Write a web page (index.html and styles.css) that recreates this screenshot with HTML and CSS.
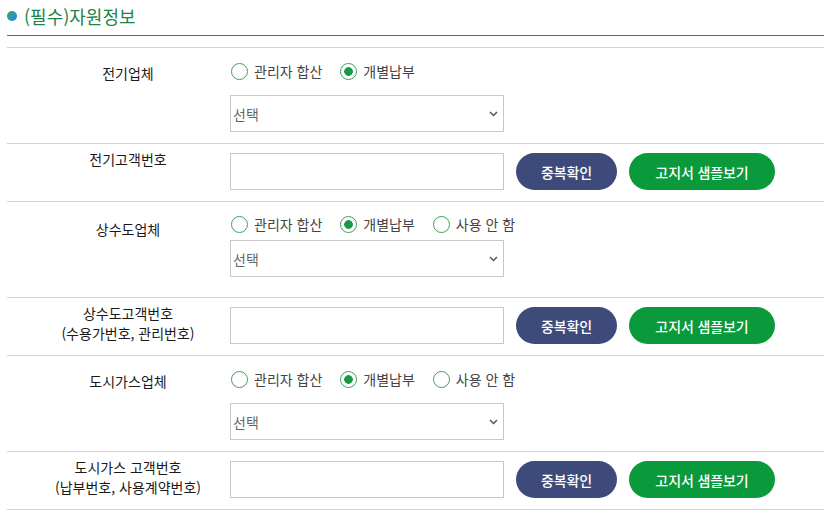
FILE: index.html
```html
<!DOCTYPE html>
<html lang="ko">
<head>
<meta charset="utf-8">
<title>(필수)자원정보</title>
<link rel="stylesheet" href="styles.css">
</head>
<body>
<div class="wrap">
  <h2 class="title"><span class="dot"></span>(필수)자원정보</h2>
  <div class="form">
    <div class="row row-choice">
      <div class="label">전기업체</div>
      <div class="value">
        <div class="radios">
          <label class="radio"><input type="radio" name="elec">관리자 합산</label>
          <label class="radio"><input type="radio" name="elec" checked>개별납부</label>
        </div>
        <div class="select-wrap">
          <select class="select"><option>선택</option></select>
          <svg class="chev" width="9" height="6" viewBox="0 0 9 6"><path d="M1 1l3.5 3.5L8 1" fill="none" stroke="#555" stroke-width="1.5"/></svg>
        </div>
      </div>
    </div>
    <div class="row row-field">
      <div class="label">전기고객번호<br>&nbsp;</div>
      <div class="value">
        <input class="text" type="text">
        <button class="btn btn-navy" type="button">중복확인</button>
        <button class="btn btn-green" type="button">고지서 샘플보기</button>
      </div>
    </div>
    <div class="row row-choice compact">
      <div class="label">상수도업체</div>
      <div class="value">
        <div class="radios">
          <label class="radio"><input type="radio" name="water">관리자 합산</label>
          <label class="radio"><input type="radio" name="water" checked>개별납부</label>
          <label class="radio"><input type="radio" name="water">사용 안 함</label>
        </div>
        <div class="select-wrap">
          <select class="select"><option>선택</option></select>
          <svg class="chev" width="9" height="6" viewBox="0 0 9 6"><path d="M1 1l3.5 3.5L8 1" fill="none" stroke="#555" stroke-width="1.5"/></svg>
        </div>
      </div>
    </div>
    <div class="row row-field">
      <div class="label">상수도고객번호<br>(수용가번호, 관리번호)</div>
      <div class="value">
        <input class="text" type="text">
        <button class="btn btn-navy" type="button">중복확인</button>
        <button class="btn btn-green" type="button">고지서 샘플보기</button>
      </div>
    </div>
    <div class="row row-choice">
      <div class="label">도시가스업체</div>
      <div class="value">
        <div class="radios">
          <label class="radio"><input type="radio" name="gas">관리자 합산</label>
          <label class="radio"><input type="radio" name="gas" checked>개별납부</label>
          <label class="radio"><input type="radio" name="gas">사용 안 함</label>
        </div>
        <div class="select-wrap">
          <select class="select"><option>선택</option></select>
          <svg class="chev" width="9" height="6" viewBox="0 0 9 6"><path d="M1 1l3.5 3.5L8 1" fill="none" stroke="#555" stroke-width="1.5"/></svg>
        </div>
      </div>
    </div>
    <div class="row row-field">
      <div class="label">도시가스 고객번호<br>(납부번호, 사용계약번호)</div>
      <div class="value">
        <input class="text" type="text">
        <button class="btn btn-navy" type="button">중복확인</button>
        <button class="btn btn-green" type="button">고지서 샘플보기</button>
      </div>
    </div>
  </div>
</div>
</body>
</html>
```

FILE: styles.css
```css
* { box-sizing: border-box; }

body {
  margin: 0;
  background: #fff;
  font-family: "Noto Sans CJK KR", "Noto Sans", sans-serif;
  color: #222;
}

.wrap {
  width: 817px;
  margin-left: 7px;
}

.title {
  display: flex;
  align-items: center;
  gap: 7px;
  height: 36px;
  margin: 0;
  padding-bottom: 4px;
  font-size: 18px;
  font-weight: 400;
  color: #218347;
  border-bottom: 1px solid #2f8442;
}

.dot {
  width: 10px;
  height: 10px;
  border-radius: 50%;
  background: linear-gradient(135deg, #3aa845 0%, #2a96c8 60%, #1f7fd0 100%);
}

.form {
  margin-top: 11px;
  border-top: 1px solid #c9d8de;
}

.row {
  display: flex;
  border-bottom: 1px solid #c9d8de;
}

.label {
  width: 223px;
  flex: none;
  padding-left: 19px;
  text-align: center;
  font-size: 14px;
  line-height: 20px;
  color: #1a1a1a;
}

.row-choice .value {
  display: flex;
  flex-direction: column;
  gap: 14px;
  padding: 13px 0 11px;
}

.row-choice .label { padding-top: 15px; }

.row-choice.compact .value {
  gap: 6px;
  padding: 12px 0 20px;
}

.row-choice.compact .label { padding-top: 17px; }

.row-field .value {
  display: flex;
  align-items: center;
  gap: 12px;
  padding: 9px 0 11px;
}

.row-field .label { padding-top: 5px; }

.radios {
  display: flex;
  align-items: center;
  height: 20px;
  gap: 17px;
}

.radio {
  display: flex;
  align-items: center;
  gap: 6px;
  font-size: 14px;
  color: #444;
  white-space: nowrap;
}

.radio input {
  appearance: none;
  -webkit-appearance: none;
  width: 17px;
  height: 17px;
  margin: 0 0 0 1px;
  border: 1px solid #3c9f5d;
  border-radius: 50%;
  background: #fff;
}

.radio input:checked {
  background: radial-gradient(circle, #169a43 0 4px, #fff 4.6px);
}

.select-wrap {
  position: relative;
  width: 274px;
  height: 37px;
}

.select {
  appearance: none;
  -webkit-appearance: none;
  width: 100%;
  height: 100%;
  padding: 0 0 0 2px;
  border: 1px solid #c8c8c8;
  border-radius: 0;
  background: #fff;
  font-family: inherit;
  font-size: 14px;
  color: #666;
}

.chev {
  position: absolute;
  right: 6px;
  top: 16px;
}

.text {
  width: 274px;
  height: 37px;
  margin: 0;
  border: 1px solid #c8c8c8;
  border-radius: 0;
  background: #fff;
  flex: none;
}

.btn {
  height: 37px;
  margin: 0;
  border: none;
  border-radius: 19px;
  color: #fff;
  font-family: inherit;
  font-size: 14px;
  font-weight: 500;
  letter-spacing: -0.1px;
  flex: none;
}

.btn-navy {
  width: 101px;
  background: #3e4a7a;
}

.btn-green {
  width: 146px;
  background: #0a9a3b;
}
```
